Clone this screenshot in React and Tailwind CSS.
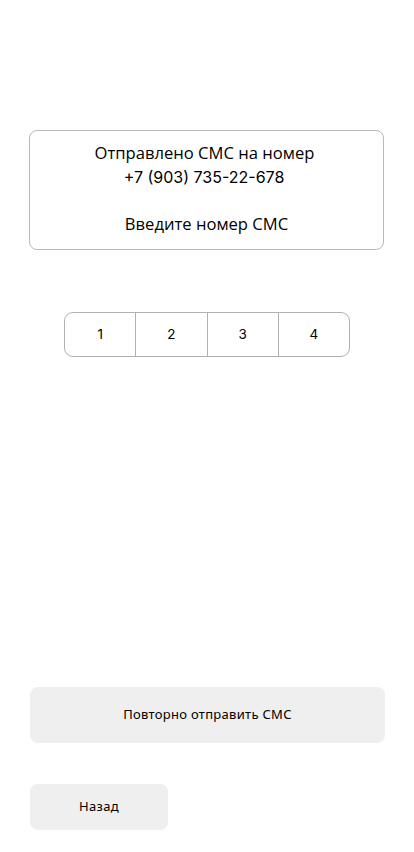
export default function App() {
  return (
    <div className="w-[414px] h-[852px] bg-white flex flex-col" style={{ fontFamily: '"Noto Sans", sans-serif' }}>
      <div className="mt-[130px] ml-[29px] w-[355px] h-[120px] border border-[#b9b9bd] rounded-[8px] flex flex-col items-center text-black text-[16.6px]" style={{ fontFamily: '"Open Sans", sans-serif' }}>
        <div className="mt-[10px] leading-[24px] pr-[4px]">Отправлено СМС на номер</div>
        <div className="leading-[24px] text-[16px] font-normal pr-[5px]" style={{ fontFamily: 'Inter, sans-serif' }}>+7 (903) 735-22-678</div>
        <div className="mt-[23px] leading-[24px]">Введите номер СМС</div>
      </div>
      <div className="mt-[62px] self-center w-[286px] h-[45px] border-[1.5px] border-[#b0b0b6] rounded-[9px] flex text-[13.5px] text-black" style={{ fontFamily: 'Inter, sans-serif' }}>
        {["1", "2", "3", "4"].map((d, i) => (
          <div key={d} className={"flex-1 flex items-center justify-center" + (i > 0 ? " border-l-[1.5px] border-[#b0b0b6]" : "")}>{d}</div>
        ))}
      </div>
      <div className="mt-[330px] ml-[30px] w-[355px] h-[56px] bg-[#efefef] rounded-[8px] flex items-center justify-center text-[13px] tracking-[0.3px] text-black">
        Повторно отправить СМС
      </div>
      <div className="mt-[41px] ml-[30px] w-[138px] h-[46px] bg-[#efefef] rounded-[8px] flex items-center justify-center text-[13px] tracking-[0.3px] text-black">
        Назад
      </div>
    </div>
  );
}
